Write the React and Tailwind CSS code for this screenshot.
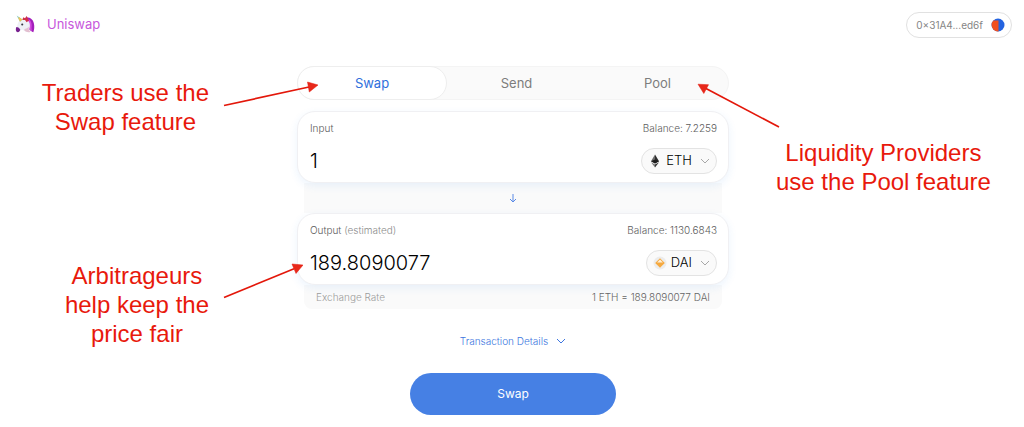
import { useState } from "react";

const UnicornLogo = () => (
  <svg viewBox="0 0 36 36" className="size-5" aria-hidden="true">
    <path d="M20 4C29 4 34 10 34.500 18c.4 5 0 9-1.500 13-3-1-5-3-8-6z" fill="#a31fbb" />
    <path d="M24 7c5 3 6 7 6 12 0 4-1 6 1 10-5-2-7-6-7-11z" fill="#d44be0" />
    <path d="M8 11c5-4 13-4 17 1 2.500 4 2 9 1 12-1 2 0 4 1 6-3 1.500-7 1-10-1-2-2-3-3-5-2.500C9 27 7 30 4.500 30 1.500 30 1 26 2.500 23 5 19 4 14 8 11z" fill="#eef1f6" />
    <path d="M17 25c3 0 6-2 8-4-1 4 0 7 3 9-3 2-8 1-11-2z" fill="#e3bfd0" />
    <path d="M2.500 21.500c3 0 6 2 7 5-1 4.500-5 5.500-7 3C1 27.500 1.300 24 2.500 21.500z" fill="#77208f" />
    <path d="M13 9l2-5 3 2 3-4 4 8-4 3-3-4z" fill="#cf3048" />
    <path d="M3 1l6 11 4.500-4z" fill="#86ccc3" />
    <path d="M5.700 5L9 12l4.500-4L7.600 4.100z" fill="#efc455" />
    <circle cx="13" cy="17" r="1.900" fill="#343741" />
  </svg>
);

const Identicon = () => (
  <svg viewBox="0 0 14 14" className="size-[14px]" aria-hidden="true">
    <circle cx="7" cy="7" r="6.500" fill="#2463e0" />
    <path d="M7.500 2.500H2.400a6.500 6.500 0 0 0 0 9.100A6.500 6.500 0 0 0 7.500 13.500z" fill="#f1501f" />
  </svg>
);

const Chevron = ({ className }) => (
  <svg viewBox="0 0 10 6" fill="none" stroke="currentColor" className={className} aria-hidden="true">
    <path d="M1 1l4 4 4-4" />
  </svg>
);

const EthIcon = () => (
  <svg viewBox="0 0 14 14" className="size-[14px] shrink-0" aria-hidden="true">
    <path d="M7 .5L3 7.200l4 2.300z" fill="#6b6b6b" />
    <path d="M7 .5l4 6.700-4 2.300z" fill="#2d2d2d" />
    <path d="M3 7.200l4-1.800 4 1.800-4 2.300z" fill="#1d1d1d" />
    <path d="M3 8.200l4 2.300v3z" fill="#777" />
    <path d="M11 8.200l-4 2.300v3z" fill="#333" />
  </svg>
);

const DaiIcon = () => (
  <svg viewBox="0 0 14 14" className="size-[14px] shrink-0" aria-hidden="true">
    <circle cx="7" cy="7" r="6.500" fill="#ececec" />
    <path d="M7 2.200L11.800 7 7 11.800 2.200 7z" fill="#f5a93f" />
    <path d="M7 3.600L9.900 6.500H4.100z" fill="#fdf0dc" />
  </svg>
);

const Arrow = ({ className, w, h, line, head }) => (
  <svg viewBox={`0 0 ${w} ${h}`} className={className} aria-hidden="true">
    <path d={line} stroke="#e3170a" strokeWidth="1.700" fill="none" />
    <path d={head} fill="#e8281a" stroke="#e3170a" strokeWidth="0.500" />
  </svg>
);

const tokens = ["ETH", "DAI"];

function CurrencyPanel({ id, label, hint, balance, value, onValue, token, onToken }) {
  return (
    <section className="relative rounded-[18px] border border-[#f0f0f3] bg-white py-2 pr-[11px] pl-3 shadow-[0_3px_8px_rgba(47,128,237,0.09)]">
      <div className="flex items-center justify-between text-[10px] leading-4 font-light text-[#5c5c5c]">
        <label htmlFor={id}>
          {label} {hint && <span className="text-[#8c8c8c]">{hint}</span>}
        </label>
        <span>Balance: {balance}</span>
      </div>
      <div className="mt-3 flex items-center justify-between">
        <input
          id={id}
          value={value}
          onChange={(e) => onValue(e.target.value)}
          inputMode="decimal"
          className="h-[26px] w-0 min-w-0 flex-1 bg-transparent text-xl font-light text-black outline-none"
        />
        <div className="flex h-[26px] items-center rounded-full border border-[#e3e3e3] bg-[#fafafa] px-[6px]">
          {token === "ETH" ? <EthIcon /> : <DaiIcon />}
          <select
            aria-label={`${label} token`}
            value={token}
            onChange={(e) => onToken(e.target.value)}
            className="ml-1 field-sizing-content appearance-none bg-transparent text-[13px] font-light text-black outline-none"
          >
            {tokens.map((t) => (
              <option key={t}>{t}</option>
            ))}
          </select>
          <Chevron className="ml-2 h-[6px] w-[10px] text-[#a8a8a8]" />
        </div>
      </div>
    </section>
  );
}

const noteClass = "absolute text-center font-['Liberation_Sans',sans-serif] text-2xl leading-[29px] whitespace-nowrap text-[#e8190c]";

export default function App() {
  const [tab, setTab] = useState("Swap");
  const [input, setInput] = useState("1");
  const [output, setOutput] = useState("189.8090077");
  const [from, setFrom] = useState("ETH");
  const [to, setTo] = useState("DAI");

  return (
    <div className="overflow-x-hidden bg-white pb-3 font-['Inter',sans-serif]">
      <header className="flex items-center justify-between px-3 pt-3">
        <a href="#" className="flex items-center gap-3 pl-[3px] text-[13px] text-[#c758dc]">
          <UnicornLogo />
          Uniswap
        </a>
        <button className="flex h-[26px] items-center gap-2 rounded-full border border-[#e1e1e1] pr-[6px] pl-[9px] text-[10px] text-[#858585]">
          0×31A4...ed6f
          <Identicon />
        </button>
      </header>

      <div className="pl-[2px]">
        <main className="relative mx-auto mt-7 w-full max-w-[432px]">
          <nav className="flex rounded-full border border-[#f4f4f4] bg-[#fafafa]">
            {["Swap", "Send", "Pool"].map((name) => (
              <button
                key={name}
                onClick={() => setTab(name)}
                className={
                  tab === name
                    ? "-m-px h-[34px] w-[150px] rounded-full border border-[#eeeeee] bg-white pt-px text-[13px] text-[#2f6fdc]"
                    : "h-8 flex-1 pt-px text-[13px] text-[#7d7d7d]"
                }
              >
                {name}
              </button>
            ))}
          </nav>

          <div className="mt-[11px]">
            <CurrencyPanel id="input-amount" label="Input" balance="7.2259" value={input} onValue={setInput} token={from} onToken={setFrom} />
            <div className="mx-[7px] flex h-[30px] items-center justify-center bg-[#fafafa]">
              <button aria-label="Switch tokens" className="text-[#5a8ae6]">
                <svg viewBox="0 0 8 9" fill="none" stroke="currentColor" className="h-[9px] w-2" aria-hidden="true">
                  <path d="M4 0v8M1 5l3 3 3-3" />
                </svg>
              </button>
            </div>
            <CurrencyPanel id="output-amount" label="Output" hint="(estimated)" balance="1130.6843" value={output} onValue={setOutput} token={to} onToken={setTo} />
            <div className="mx-[7px] flex h-6 items-center justify-between rounded-b-lg bg-[#fafafa] px-3 text-[10px] font-light">
              <span className="text-[#9c9c9c]">Exchange Rate</span>
              <span className="text-[#666666]">1 ETH = 189.8090077 DAI</span>
            </div>
          </div>

          <div className="mt-6 flex flex-col items-center gap-6">
            <button className="flex h-4 items-center gap-2 text-[10px] font-light text-[#3d76e0]">
              Transaction Details
              <Chevron className="h-[6px] w-[10px]" />
            </button>
            <button className="h-[42px] w-[206px] rounded-full bg-[#4680e4] text-xs text-white">Swap</button>
          </div>

          <p className={`${noteClass} top-[12px] right-full mr-[88px]`}>
            Traders use the
            <br />
            Swap feature
          </p>
          <p className={`${noteClass} top-[195px] right-full mr-[88px]`}>
            Arbitrageurs
            <br />
            help keep the
            <br />
            price fair
          </p>
          <p className={`${noteClass} top-[72px] left-full ml-[47px]`}>
            Liquidity Providers
            <br />
            use the Pool feature
          </p>

          <Arrow className="pointer-events-none absolute top-[14px] right-full -mr-[21px] h-[28px] w-[95px]" w={95} h={28} line="M1 25.500L86 7" head="M95 5L84.500 2l1.800 10z" />
          <Arrow className="pointer-events-none absolute top-[197px] right-full -mr-[6px] h-[36px] w-[80px]" w={80} h={36} line="M1 34.500L71 5.800" head="M80 2L69 1l4 9.500z" />
          <Arrow className="pointer-events-none absolute top-[16px] left-full -ml-[32px] h-[46px] w-[83px]" w={83} h={46} line="M82 45L9 6.500" head="M1 2.200L11.500 2.700 6.800 11.500z" />
        </main>
      </div>
    </div>
  );
}
